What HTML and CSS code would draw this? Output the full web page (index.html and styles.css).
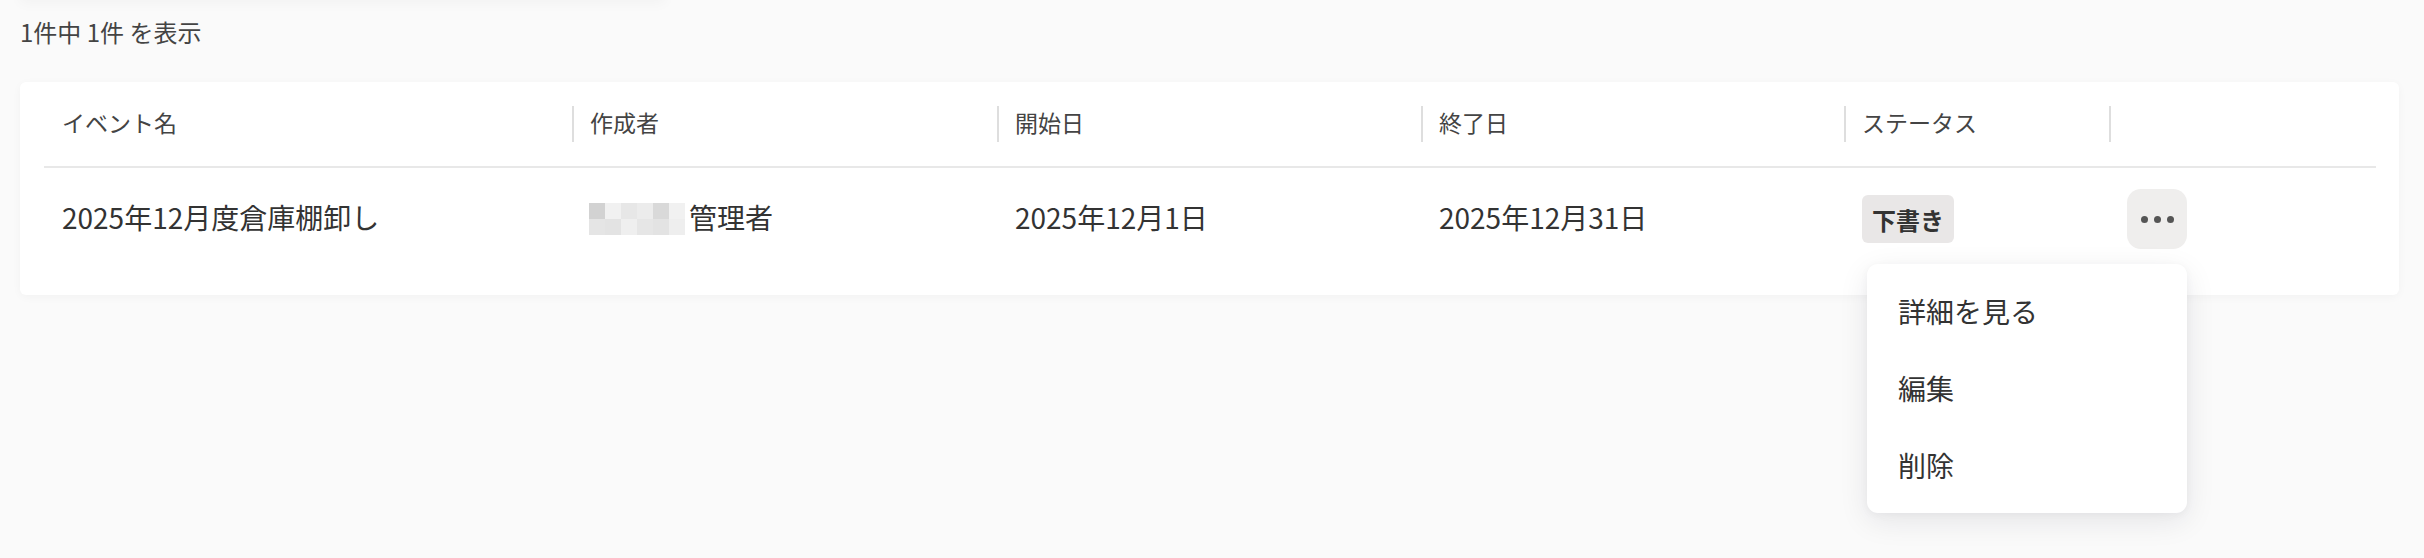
FILE: index.html
```html
<!DOCTYPE html>
<html lang="ja">
<head>
<meta charset="utf-8">
<title>イベント一覧</title>
<link rel="stylesheet" href="styles.css">
</head>
<body>
<div class="page">
  <div class="toolbar-edge"></div>
  <p class="count">1件中 1件 を表示</p>
  <div class="card">
    <div class="table">
      <div class="row head">
        <div class="cell first"><span class="label">イベント名</span></div>
        <div class="cell"><span class="sep"></span><span class="label">作成者</span></div>
        <div class="cell"><span class="sep"></span><span class="label">開始日</span></div>
        <div class="cell"><span class="sep"></span><span class="label">終了日</span></div>
        <div class="cell"><span class="sep"></span><span class="label">ステータス</span></div>
        <div class="cell"><span class="sep"></span></div>
      </div>
      <div class="row body">
        <div class="cell"><span class="text">2025年12月度倉庫棚卸し</span></div>
        <div class="cell">
          <span class="mosaic">
            <i class="m1"></i><i class="m2"></i><i class="m3"></i><i class="m4"></i><i class="m5"></i><i class="m6"></i>
            <i class="m7"></i><i class="m8"></i><i class="m9"></i><i class="m10"></i><i class="m11"></i><i class="m12"></i>
          </span>
          <span class="text">管理者</span>
        </div>
        <div class="cell"><span class="text">2025年12月1日</span></div>
        <div class="cell"><span class="text">2025年12月31日</span></div>
        <div class="cell"><span class="badge">下書き</span></div>
        <div class="cell">
          <div class="actions">
            <button class="more" type="button" aria-label="操作">
              <span class="dot"></span><span class="dot"></span><span class="dot"></span>
            </button>
            <ul class="menu">
              <li>詳細を見る</li>
              <li>編集</li>
              <li>削除</li>
            </ul>
          </div>
        </div>
      </div>
    </div>
  </div>
</div>
</body>
</html>
```
FILE: styles.css
```css
html, body {
  margin: 0;
  padding: 0;
  background: #fafafa;
}
body {
  font-family: "Noto Sans CJK JP", "Noto Sans", sans-serif;
  color: #333;
  min-height: 558px;
}
.page {
  padding: 0 25px 0 20px;
}
.toolbar-edge {
  width: 645px;
  height: 40px;
  margin: -40px 0 0 0;
  background: #fafafa;
  box-shadow: 0 3px 14px rgba(0, 0, 0, 0.035);
}
.count {
  margin: 15px 0 33px 0;
  font-size: 24px;
  line-height: 34px;
  color: #444;
}
.card {
  background: #fff;
  border-radius: 6px;
  box-shadow: 0 2px 10px rgba(0, 0, 0, 0.035);
  padding: 0 23px 25px 24px;
}
.row {
  display: grid;
  grid-template-columns: 528px 425px 424px 423px 265px 267px;
}
.row.head {
  height: 84px;
  border-bottom: 2px solid #e8e8e8;
}
.row.body {
  height: 102px;
}
.cell {
  display: flex;
  align-items: center;
  padding-left: 18px;
}
.head .cell {
  padding-left: 0;
  font-size: 23px;
  color: #444;
}
.head .cell.first {
  padding-left: 18px;
}
.label {
  margin-bottom: 5px;
}
.sep {
  width: 2px;
  height: 36px;
  background: #dedede;
  margin-right: 16px;
}
.body .cell {
  font-size: 28px;
  color: #333;
}
.text {
  margin-bottom: 4px;
}
.mosaic {
  display: grid;
  grid-template-columns: repeat(6, 16px);
  grid-template-rows: 16px 16px;
  margin-left: -1px;
  margin-right: 4px;
}
.mosaic i { display: block; }
.m1 { background: #d2d2d2; }
.m2 { background: #f1f1f1; }
.m3 { background: #e7e7e7; }
.m4 { background: #ececec; }
.m5 { background: #d9d9d9; }
.m6 { background: #f1f1f1; }
.m7 { background: #e5e5e5; }
.m8 { background: #e3e3e3; }
.m9 { background: #efefef; }
.m10 { background: #e6e6e6; }
.m11 { background: #e3e3e3; }
.m12 { background: #eeeeee; }
.badge {
  display: inline-flex;
  align-items: center;
  justify-content: center;
  width: 92px;
  height: 48px;
  border-radius: 6px;
  background: #e9e7e7;
  font-size: 24px;
  font-weight: 700;
  color: #333;
}
.actions {
  position: relative;
}
.more {
  display: flex;
  align-items: center;
  justify-content: center;
  gap: 6px;
  width: 60px;
  height: 60px;
  padding: 0;
  border: 0;
  border-radius: 14px;
  background: #efeeed;
}
.dot {
  width: 7px;
  height: 7px;
  border-radius: 50%;
  background: #555;
}
.menu {
  position: absolute;
  right: 0;
  top: 75px;
  width: 320px;
  margin: 0;
  padding: 9px 0;
  list-style: none;
  background: #fff;
  border-radius: 11px;
  box-shadow: 0 8px 30px rgba(20, 20, 40, 0.09), 0 2px 8px rgba(20, 20, 40, 0.04);
  z-index: 2;
}
.menu li {
  height: 77px;
  line-height: 76px;
  padding-left: 31px;
  font-size: 28px;
  color: #333;
}
```
